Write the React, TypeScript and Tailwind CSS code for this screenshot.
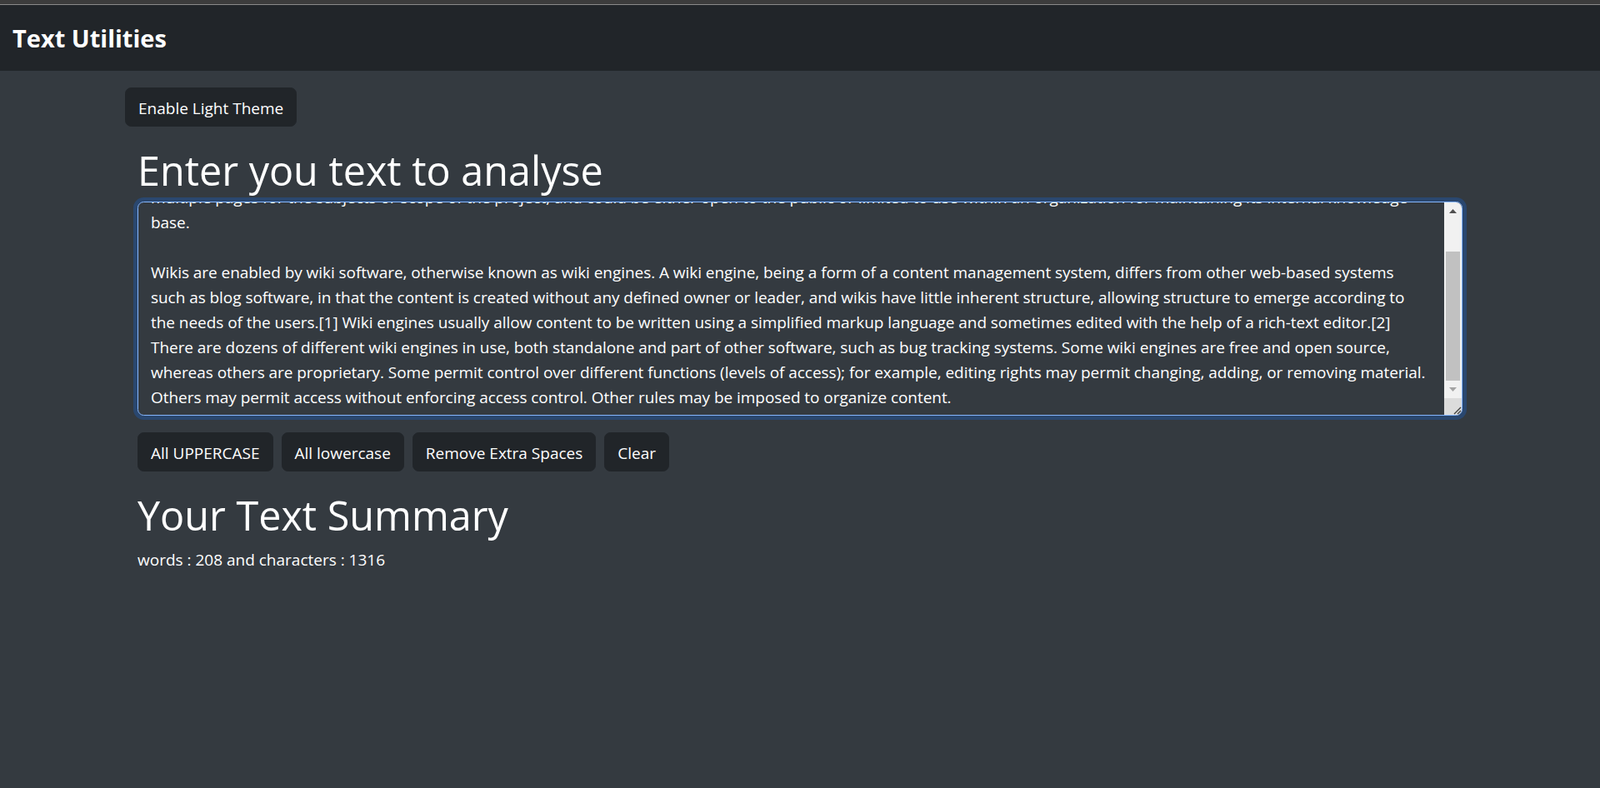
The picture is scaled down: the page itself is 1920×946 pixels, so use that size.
import React, { useEffect, useRef, useState } from 'react';

const SAMPLE = `A wiki (/ˈwɪki/ (listen) WIK-ee) is an online hypertext publication collaboratively edited and managed by its own audience, using a web browser. A typical wiki contains
multiple pages for the subjects or scope of the project, and could be either open to the public or limited to use within an organization for maintaining its internal knowledge base.

Wikis are enabled by wiki software, otherwise known as wiki engines. A wiki engine, being a form of a content management system, differs from other web-based systems such as blog software, in that the content is created without any defined owner or leader, and wikis have little inherent structure, allowing structure to emerge according to the needs of the users.[1] Wiki engines usually allow content to be written using a simplified markup language and sometimes edited with the help of a rich-text editor.[2] There are dozens of different wiki engines in use, both standalone and part of other software, such as bug tracking systems. Some wiki engines are free and open source, whereas others are proprietary. Some permit control over different functions (levels of access); for example, editing rights may permit changing, adding, or removing material. Others may permit access without enforcing access control. Other rules may be imposed to organize content.`;

export default function App() {
  const [text, setText] = useState(SAMPLE);
  const [light, setLight] = useState(false);
  const ref = useRef<HTMLTextAreaElement>(null);

  // keep the end of the text in view
  useEffect(() => {
    if (ref.current) ref.current.scrollTop = ref.current.scrollHeight;
  }, [text]);

  const btn = 'rounded-[7.5px] border border-[#212529] bg-[#212529] px-[15px] pt-[8.5px] pb-[6.5px] text-[19px] leading-[30px] text-white';

  return (
    <div className="min-h-screen bg-[#343a40] font-['Open_Sans',sans-serif] text-white">
      <div className="h-[5px] bg-[#3c3c3c]" />
      <div className="h-px bg-[#8a8a8a]" />
      <nav className="flex h-[79px] items-center bg-[#212529] px-[15px]">
        <span className="text-[29px] font-bold leading-[44px]">Text Utilities</span>
      </nav>

      <div className="mx-auto w-[1650px] px-[15px]">
        <button className={`${btn} mt-[20px]`} onClick={() => setLight(!light)}>
          Enable Light Theme
        </button>

        <div className="mt-[20px] px-[15px]">
          <h1 className="mb-[10px] pt-[4px] text-[48.5px] font-medium leading-[56px]">Enter you text to analyse</h1>

          <div className="mb-[20px] flex h-[257px] overflow-hidden rounded-[7.5px] border border-[#86b7fe] bg-[#343a40] shadow-[0_0_0_5px_rgba(13,110,253,0.25)]">
            <textarea
              ref={ref}
              rows={8}
              value={text}
              onChange={(e) => setText(e.target.value)}
              className="min-w-0 flex-1 resize-none bg-transparent px-[15px] pt-[7.5px] pb-[6px] text-[19px] leading-[30px] tracking-[-0.05px] text-white outline-none [scrollbar-width:none]"
            />
            {/* scrollbar */}
            <div className="flex w-[21px] flex-col bg-[#f1f1f1]">
              <div className="flex h-[21px] items-center justify-center">
                <svg width="9" height="5" viewBox="0 0 9 5"><path d="M4.5 0L9 5H0z" fill="#505050" /></svg>
              </div>
              <div className="flex flex-1 flex-col justify-end px-[2px]">
                <div className="h-[155px] bg-[#c1c1c1]" />
              </div>
              <div className="flex h-[21px] items-center justify-center">
                <svg width="9" height="5" viewBox="0 0 9 5"><path d="M0 0H9L4.5 5z" fill="#a3a3a3" /></svg>
              </div>
              <div className="flex h-[20px] items-end justify-end bg-[#dcdcdc]">
                <svg width="12" height="12" viewBox="0 0 12 12">
                  <path d="M11 3L3 11M11 7L7 11" stroke="#404040" strokeWidth="1.3" />
                </svg>
              </div>
            </div>
          </div>

          <div className="flex gap-[10px]">
            <button className={btn} onClick={() => setText(text.toUpperCase())}>All UPPERCASE</button>
            <button className={btn} onClick={() => setText(text.toLowerCase())}>All lowercase</button>
            <button className={btn} onClick={() => setText(text.split(/[ ]+/).join(' '))}>Remove Extra Spaces</button>
            <button className={btn} onClick={() => setText('')}>Clear</button>
          </div>
        </div>

        <div className="my-[20px] px-[15px]">
          <h1 className="mb-[10px] pt-[4px] text-[48.5px] font-medium leading-[56px]">Your Text Summary</h1>
          <p className="pt-px text-[19px] leading-[30px]">words : 208 and characters : 1316</p>
        </div>
      </div>
    </div>
  );
}
